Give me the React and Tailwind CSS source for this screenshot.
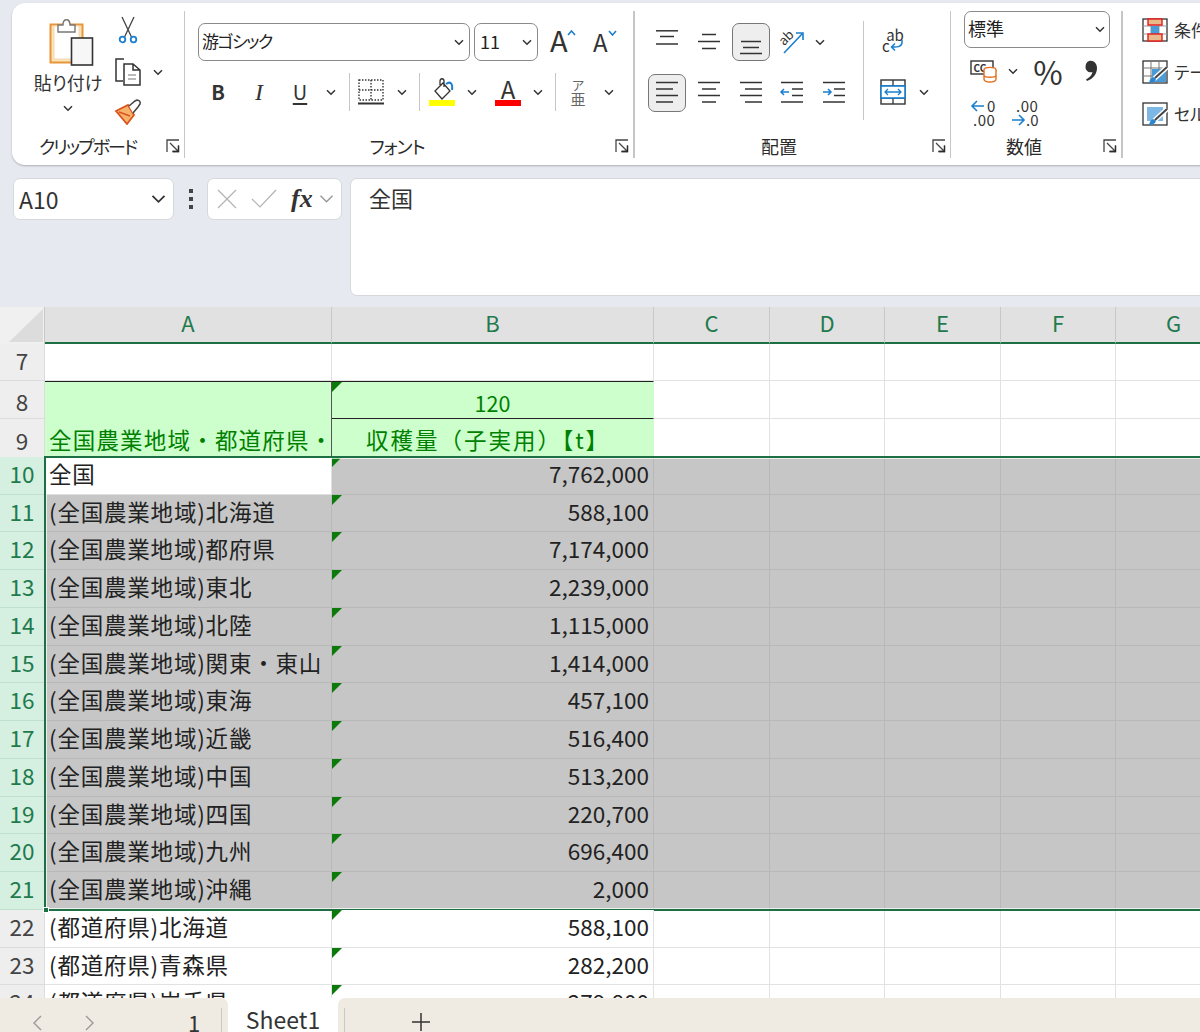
import React from "react";

const FONT = { fontFamily: '"Noto Sans CJK JP", "Noto Sans", sans-serif' };
const PALT = { fontFeatureSettings: '"palt"' };

const Chev = ({ w = 10, c = "#333", sw = 1.5, className = "" }) => (
  <svg width={w} height={w * 0.7} viewBox="0 0 10 7" className={className}>
    <path d="M1 1.2 L5 5.2 L9 1.2" fill="none" stroke={c} strokeWidth={sw} />
  </svg>
);

const Launcher = () => (
  <svg width="14" height="14" viewBox="0 0 14 14">
    <path d="M1 13 V1 H13 M4 4 L12.5 12.5 M6.5 12.5 H12.5 V6.5" fill="none" stroke="#444" strokeWidth="1.3" />
    <path d="M6.5 12.5 H12.5 V6.5" fill="none" stroke="#2a2a2a" strokeWidth="1.3" />
  </svg>
);

const Lines = ({ lines, w = 24, h = 24, accent }) => (
  <svg width={w} height={h} viewBox={`0 0 ${w} ${h}`} className="overflow-visible">
    {lines.map(([a, b, y], i) => (
      <line key={i} x1={a} x2={b} y1={y} y2={y} stroke="#333" strokeWidth="1.5" />
    ))}
    {accent}
  </svg>
);

const Paste = () => (
  <svg width="46" height="50" viewBox="0 0 46 50">
    <rect x="1.5" y="7.5" width="32" height="38" fill="#fbe3b8" stroke="#e8953a" strokeWidth="2" />
    <rect x="5" y="9" width="25" height="33" fill="#fff" stroke="#f2d9b0" />
    <path d="M9 8 V15 H26 V8 H21 C21 1 14 1 14 8 Z" fill="#fff" stroke="#777" strokeWidth="1.4" />
    <rect x="22.5" y="21" width="21" height="27" fill="#f7f7f7" stroke="#333" strokeWidth="1.6" />
  </svg>
);
const Scissors = () => (
  <svg width="20" height="28" viewBox="0 0 20 28">
    <path d="M4 1 L13.5 21 M16 1 L6.5 21" stroke="#444" strokeWidth="1.3" fill="none" />
    <circle cx="4.5" cy="23.5" r="2.8" fill="#fff" stroke="#1a7fd0" strokeWidth="1.8" />
    <circle cx="15.5" cy="23.5" r="2.8" fill="#fff" stroke="#1a7fd0" strokeWidth="1.8" />
  </svg>
);
const Copy = () => (
  <svg width="28" height="28" viewBox="0 0 28 28">
    <path d="M10 1 H2 V23 H9" fill="none" stroke="#333" strokeWidth="1.5" />
    <path d="M10 6 H19 L26 12 V27 H10 Z M19 6 V12 H26" fill="#fff" stroke="#333" strokeWidth="1.5" />
    <path d="M14 17 H22 M14 21 H22" stroke="#777" strokeWidth="1.2" />
  </svg>
);
const Brush = () => (
  <svg width="28" height="26" viewBox="0 0 28 26">
    <path d="M2 12 L14 6 L20 16 L13 25 Z" fill="#f6b26b" stroke="#d9541e" strokeWidth="1.8" />
    <path d="M5 13 L16 17" stroke="#d9541e" strokeWidth="1.5" />
    <path d="M15 7 L21 2 L23 1 C25 1 27 3 26 5 L24 8 L19 14" fill="#fff" stroke="#444" strokeWidth="1.5" />
  </svg>
);
const Borders = () => (
  <svg width="26" height="26" viewBox="0 0 26 26">
    <path d="M1 1 H25 V21 H1 Z M13 1 V21 M1 11 H25" fill="none" stroke="#333" strokeWidth="1.4" strokeDasharray="1.5 1.5" />
    <path d="M0 24.5 H26" stroke="#333" strokeWidth="2" />
  </svg>
);
const Fill = () => (
  <svg width="26" height="28" viewBox="0 0 26 28">
    <path d="M6 13 L14 5 L21 13 L13 21 Z M11 7 V3 C11 0 15 0 15 3 V9" fill="#fff" stroke="#333" strokeWidth="1.3" />
    <path d="M17 6 C21 3 24 5 23 12" fill="none" stroke="#1a7fd0" strokeWidth="2" />
    <rect x="0" y="22" width="26" height="6" fill="#ffff00" />
  </svg>
);
const Orient = () => (
  <svg width="28" height="28" viewBox="0 0 28 28">
    <text x="2" y="15" fontSize="13" fill="#333" transform="rotate(-45 8 12)" style={FONT}>ab</text>
    <path d="M6 25 L24 6 M18 5 H25 V12" fill="none" stroke="#1a7fd0" strokeWidth="1.6" />
  </svg>
);
const Merge = () => (
  <svg width="26" height="26" viewBox="0 0 26 26">
    <rect x="1" y="1" width="24" height="24" fill="#fff" stroke="#333" strokeWidth="1.4" />
    <path d="M1 7 H25 M1 19 H25 M13 1 V7 M13 19 V25" stroke="#333" strokeWidth="1.3" />
    <rect x="1" y="7" width="24" height="12" fill="#fff" stroke="#1a7fd0" strokeWidth="1.6" />
    <path d="M5 13 H21 M8 10 L5 13 L8 16 M18 10 L21 13 L18 16" fill="none" stroke="#1a7fd0" strokeWidth="1.3" />
  </svg>
);
const Accounting = () => (
  <svg width="28" height="24" viewBox="0 0 28 24">
    <rect x="1" y="2" width="22" height="13" fill="#fff" stroke="#333" strokeWidth="1.4" />
    <text x="3.5" y="13" fontSize="10" fontWeight="700" fill="#333" style={FONT}>CC</text>
    <ellipse cx="20" cy="11" rx="6" ry="2.6" fill="#fff" stroke="#e2701e" strokeWidth="1.4" />
    <path d="M14 11 V20 C14 24 26 24 26 20 V11 M14 16 C14 19 26 19 26 16" fill="#fff" stroke="#e2701e" strokeWidth="1.4" />
  </svg>
);
const Comma = () => (
  <svg width="14" height="22" viewBox="0 0 14 22">
    <path d="M5 1 C10 0 13 4 13 8 C13 14 9 19 3 21 L2 19.5 C6 17 8 15 8.5 12 C5 13 1.5 11 1.5 7 C1.5 3.5 3 1.5 5 1 Z" fill="#333" />
  </svg>
);
const Arrow = ({ dir }) => (
  <svg width="14" height="12" viewBox="0 0 14 12">
    <path d={dir === "l" ? "M14 6 H2 M7 1 L2 6 L7 11" : "M0 6 H12 M7 1 L12 6 L7 11"} fill="none" stroke="#1a7fd0" strokeWidth="1.6" />
  </svg>
);
const CondFormat = () => (
  <svg width="26" height="24" viewBox="0 0 26 24">
    <rect x="1" y="1" width="24" height="22" fill="#fff" stroke="#333" strokeWidth="1.3" />
    <path d="M9 1 V23 M17 1 V23 M1 8 H25 M1 16 H25" stroke="#999" strokeWidth="1" />
    <rect x="9" y="8" width="8" height="8" fill="#4a9bd6" />
    <rect x="6" y="1" width="14" height="6" fill="#e8b98a" stroke="#e81a1a" strokeWidth="1.4" />
    <rect x="6" y="16" width="14" height="7" fill="#e8b98a" stroke="#e81a1a" strokeWidth="1.4" />
  </svg>
);
const TableFmt = ({ solid }) => (
  <svg width="26" height="24" viewBox="0 0 26 24">
    <rect x="1" y="1" width="24" height="22" fill="#fff" stroke="#333" strokeWidth="1.3" />
    {solid ? <rect x="5" y="5" width="16" height="14" fill="#7db8e4" /> : <path d="M1 8 H25 M9 1 V23 M17 1 V23 M1 16 H25" stroke="#777" strokeWidth="1" />}
    {!solid && <rect x="10" y="9" width="14" height="13" fill="#4a9bd6" />}
    <path d="M25 7 L12 19" stroke="#fff" strokeWidth="5" />
    <path d="M25 7 L13 18" stroke="#444" strokeWidth="2" />
    <path d="M7 23 C8 17 12 16 14 19 C13 22 10 23 7 23 Z" fill="#2a86d1" />
  </svg>
);

const Cell = ({ w, children, className = "" }) => (
  <div className={`flex items-center justify-center shrink-0 ${className}`} style={{ width: w }}>{children}</div>
);
const VSep = () => <div className="w-px h-[38px] bg-[#c6c6c6] shrink-0" />;

const GroupFooter = ({ label, pad, track = 0 }) => (
  <div className="mt-auto flex items-center h-[24px] pr-[4px]">
    <div className="flex-1 text-center text-[18px] leading-none text-[#2a2a2a]" style={{ paddingRight: pad, letterSpacing: track, ...PALT }}>{label}</div>
    <Launcher />
  </div>
);

const Ribbon = () => (
  <div className="ml-3 mt-[3px] w-[1230px] h-[162px] bg-white rounded-[13px] shadow-[0_1px_2px_rgba(0,0,0,0.25)] flex pt-[8px] shrink-0">
    {/* clipboard */}
    <div className="w-[173px] h-[147px] border-r border-[#c6c6c6] flex flex-col shrink-0">
      <div className="flex">
        <div className="ml-[22px] w-[68px] flex flex-col items-center pt-[6px] shrink-0">
          <div className="ml-[8px]"><Paste /></div>
          <div className="text-[18px] leading-none mt-[6px] text-[#333] whitespace-nowrap" style={PALT}>貼り付け</div>
          <Chev className="mt-[14px]" />
        </div>
        <div className="ml-[12px] flex flex-col pt-[5px]">
          <div className="ml-[4px] h-[36px]"><Scissors /></div>
          <div className="flex items-center mt-[5px] h-[30px]"><Copy /><Chev className="ml-[11px]" /></div>
          <div className="mt-[12px]"><Brush /></div>
        </div>
      </div>
      <GroupFooter label="クリップボード" pad={3} track={-2} />
    </div>
    {/* font */}
    <div className="w-[450px] h-[147px] border-r-2 border-[#c6c6c6] flex flex-col shrink-0">
      <div className="flex items-center pl-[13px] pt-[12px]">
        <div className="w-[272px] h-[38px] border border-[#8a8a8a] rounded-[7px] flex items-center justify-between pl-[3px] pr-[5px] text-[17px] tracking-[-1.5px] text-[#222]">
          <span className="-mt-[2px]" style={PALT}>游ゴシック</span><Chev />
        </div>
        <div className="ml-[4px] w-[64px] h-[38px] border border-[#8a8a8a] rounded-[7px] flex items-center justify-between pl-[5px] pr-[5px] text-[18px] text-[#222]">
          <span className="-mt-[2px]">11</span><Chev />
        </div>
        <div className="ml-[12px] w-[26px] flex items-start relative -mt-[6px]">
          <span className="text-[29px] leading-none text-[#333]">A</span>
          <svg width="9" height="6" viewBox="0 0 9 6" className="mt-[5px] -ml-[1px]"><path d="M1 5 L4.5 1 L8 5" fill="none" stroke="#1a7fd0" strokeWidth="1.6" /></svg>
        </div>
        <div className="ml-[17px] w-[26px] flex items-start -mt-[4px]">
          <span className="text-[24px] leading-none text-[#333] mt-[4px]">A</span>
          <svg width="9" height="6" viewBox="0 0 9 6" className="mt-[4px]"><path d="M1 1 L4.5 5 L8 1" fill="none" stroke="#1a7fd0" strokeWidth="1.6" /></svg>
        </div>
      </div>
      <div className="flex items-center pt-[12px] pl-[12px]">
        <Cell w={42} className="text-[20px] font-bold text-[#333]">B</Cell>
        <Cell w={40}><span className="text-[24px] italic text-[#333]" style={{ fontFamily: '"Liberation Serif", serif' }}>I</span></Cell>
        <Cell w={42}><span className="text-[20px] underline underline-offset-[3px] text-[#333]">U</span></Cell>
        <Cell w={20}><Chev /></Cell>
        <Cell w={16}><VSep /></Cell>
        <Cell w={28}><Borders /></Cell>
        <Cell w={33}><Chev /></Cell>
        <Cell w={2}><VSep /></Cell>
        <Cell w={44}><Fill /></Cell>
        <Cell w={16}><Chev /></Cell>
        <Cell w={50} className="flex-col ml-[3px]">
          <span className="text-[24px] leading-[22px] text-[#333]">A</span>
          <span className="w-[26px] h-[6px] bg-[#ff0000]" />
        </Cell>
        <Cell w={10}><Chev /></Cell>
        <Cell w={24}><VSep /></Cell>
        <Cell w={22} className="flex-col text-[#666] leading-none">
          <span className="text-[13px] leading-[13px]">ア</span>
          <span className="text-[15px] leading-[15px]">亜</span>
        </Cell>
        <Cell w={40}><Chev /></Cell>
      </div>
      <GroupFooter label="フォント" pad={6} track={-1} />
    </div>
    {/* alignment */}
    <div className="w-[316px] h-[147px] border-r border-[#c6c6c6] flex shrink-0 relative">
      <div className="flex flex-col flex-1 min-w-0">
        <div className="flex">
          <div className="w-[228px] shrink-0 flex flex-col pl-[13px] pt-[12px]">
            <div className="flex items-center h-[38px]">
              <Cell w={38}><Lines lines={[[1, 23, 0.8], [5, 19, 6.5], [1, 23, 14]]} /></Cell>
              <Cell w={46}><Lines lines={[[5, 19, 4.5], [1, 23, 11.5], [5, 19, 18.5]]} /></Cell>
              <Cell w={38} className="h-[38px] bg-[#eeeeee] border border-[#777] rounded-[7px]"><Lines lines={[[2, 22, 11.5], [4, 20, 17.5], [1, 23, 23.5]]} /></Cell>
              <Cell w={44}><Orient /></Cell>
              <Cell w={12}><Chev /></Cell>
            </div>
            <div className="flex items-center h-[38px] mt-[13px]">
              <Cell w={38} className="h-[38px] bg-[#eeeeee] border border-[#777] rounded-[7px]"><Lines lines={[[1, 23, 1.5], [1, 18, 8], [1, 23, 14.5], [1, 18, 21]]} /></Cell>
              <Cell w={46}><Lines lines={[[1, 23, 1.5], [5, 19, 8], [1, 23, 14.5], [5, 19, 21]]} /></Cell>
              <Cell w={38}><Lines lines={[[1, 23, 1.5], [6, 23, 8], [1, 23, 14.5], [6, 23, 21]]} /></Cell>
              <Cell w={44}><Lines lines={[[1, 23, 1.5], [12, 23, 8], [12, 23, 14.5], [1, 23, 21]]} accent={<path d="M9 11 H1 M4 8 L1 11 L4 14" fill="none" stroke="#1a7fd0" strokeWidth="1.5" />} /></Cell>
              <Cell w={40}><Lines lines={[[1, 23, 1.5], [12, 23, 8], [12, 23, 14.5], [1, 23, 21]]} accent={<path d="M1 11 H9 M6 8 L9 11 L6 14" fill="none" stroke="#1a7fd0" strokeWidth="1.5" />} /></Cell>
            </div>
          </div>
          <div className="w-px h-[99px] mt-[10px] bg-[#c6c6c6] shrink-0" />
          <div className="flex flex-col pl-[16px] pt-[18px]">
            <div className="w-[30px] flex flex-col items-center leading-[11px] text-[15px] text-[#333] relative h-[27px]">
              <span>ab</span>
              <span className="flex items-center w-full pl-[2px]">c
                <svg width="13" height="11" viewBox="0 0 13 11"><path d="M12 0 V2 C12 7 8 7 2 7 M5 3.5 L1.5 7 L5 10.5" fill="none" stroke="#1a7fd0" strokeWidth="1.5" /></svg>
              </span>
            </div>
            <div className="flex items-center mt-[23px]"><Merge /><Chev className="ml-[13px]" /></div>
          </div>
        </div>
        <GroupFooter label="配置" pad={9} />
      </div>
    </div>
    {/* number */}
    <div className="w-[172px] h-[147px] border-r-2 border-[#c6c6c6] flex flex-col shrink-0 pl-[13px]">
      <div className="w-[146px] h-[37px] border border-[#8a8a8a] rounded-[7px] flex items-center justify-between pl-[3px] pr-[4px] text-[18px] text-[#222]">
        <span className="-mt-[2px]">標準</span><Chev />
      </div>
      <div className="flex items-center mt-[8px] h-[30px]">
        <Cell w={40}><Accounting /></Cell>
        <Cell w={18}><Chev /></Cell>
        <Cell w={52} className="text-[32px] leading-none text-[#333]">%</Cell>
        <Cell w={34}><Comma /></Cell>
      </div>
      <div className="flex items-center mt-[12px] h-[30px] pl-[6px] text-[#333] text-[15px] leading-[14px]">
        <div className="w-[42px] flex flex-col">
          <div className="flex items-center h-[14px]"><Arrow dir="l" /><span className="ml-[3px]">0</span></div>
          <div className="h-[14px] pl-[3px] tracking-[0.5px]">.00</div>
        </div>
        <div className="flex flex-col">
          <div className="h-[14px] pl-[4px] tracking-[0.5px]">.00</div>
          <div className="flex items-center h-[14px]"><Arrow dir="r" /><span>.0</span></div>
        </div>
      </div>
      <GroupFooter label="数値" pad={19} />
    </div>
    {/* styles */}
    <div className="flex flex-col pl-[19px] pt-[7px] gap-[18px] text-[17px] text-[#333]">
      {[<CondFormat />, <TableFmt />, <TableFmt solid />].map((ic, i) => (
        <div key={i} className="flex items-center gap-[6px] h-[24px] whitespace-nowrap">
          {ic}<span style={PALT}>{["条件付き書式", "テーブルとして書式設定", "セルのスタイル"][i]}</span>
        </div>
      ))}
    </div>
  </div>
);

const FormulaBar = () => (
  <div className="flex items-start mt-[13px] pl-[13px] h-[129px] shrink-0">
    <div className="w-[161px] h-[42px] shrink-0 bg-white rounded-[7px] border border-[#d6d8dc] flex items-center justify-between pl-[5px] pr-[7px] text-[23px] text-[#333]">
      <span>A10</span><Chev w={15} sw={1.2} />
    </div>
    <div className="w-[33px] h-[42px] shrink-0 flex flex-col items-center justify-center gap-[4px]">
      {[0, 1, 2].map((i) => <span key={i} className="w-[4px] h-[4px] bg-[#444]" />)}
    </div>
    <div className="w-[135px] h-[42px] shrink-0 bg-white rounded-[7px] border border-[#d6d8dc] flex items-center text-[#aaa]">
      <svg width="20" height="20" viewBox="0 0 20 20" className="ml-[9px]"><path d="M1 1 L19 19 M19 1 L1 19" stroke="#b3b3b3" strokeWidth="1.2" /></svg>
      <svg width="26" height="20" viewBox="0 0 26 20" className="ml-[14px]"><path d="M1 10 L9 18 L25 1" fill="none" stroke="#b3b3b3" strokeWidth="1.2" /></svg>
      <span className="ml-[14px] text-[26px] leading-none font-bold italic text-[#333]" style={{ fontFamily: '"Liberation Serif", serif' }}>fx</span>
      <Chev w={15} c="#999" sw={1} className="ml-[6px]" />
    </div>
    <div className="ml-[8px] w-[900px] h-[118px] shrink-0 bg-white rounded-[7px] border border-[#d6d8dc] pl-[18px] pt-[2px] text-[22px] text-[#333]">全国</div>
  </div>
);

const COLS = [287, 322, 116, 115, 116, 115, 116];
const ROW_H = "h-[37.75px]";

const Tri = () => <span className="absolute left-0 top-0 w-0 h-0 border-t-[10px] border-r-[10px] border-t-[#0b7a0b] border-r-transparent" />;

const Row = ({ n, a, b, sel, white, mark = true }) => (
  <div className={`flex ${ROW_H} shrink-0`}>
    <div className={`w-[45px] shrink-0 flex items-center justify-center pb-[3px] text-[22.5px] border-b border-r ${sel ? "bg-[#d5efe0] text-[#1f7a4d] border-[#bfe0cd]" : "bg-[#eeeeee] text-[#444] border-[#dcdcdc]"}`}>{n}</div>
    <div className={`w-[287px] shrink-0 flex items-center pl-[4px] pb-[3px] whitespace-nowrap overflow-hidden text-[22.5px] tracking-[0.8px] text-[#222] border-b border-r ${white ? "bg-white border-[#e0e0e0]" : sel ? "bg-[#c6c6c6] border-[#b8b8b8]" : "bg-white border-[#e2e2e2]"}`}>{a}</div>
    <div className={`relative w-[322px] shrink-0 flex items-center justify-end pr-[4px] pb-[3px] text-[22.5px] text-[#222] border-b border-r ${sel ? "bg-[#c6c6c6] border-[#b8b8b8]" : "bg-white border-[#e2e2e2]"}`}>
      {mark && <Tri />}{b}
    </div>
    {COLS.slice(2).map((w, i) => (
      <div key={i} style={{ width: w }} className={`shrink-0 border-b border-r ${sel ? "bg-[#c6c6c6] border-[#b8b8b8]" : "bg-white border-[#e2e2e2]"}`} />
    ))}
  </div>
);

const selected = [
  ["全国", "7,762,000"],
  ["(全国農業地域)北海道", "588,100"],
  ["(全国農業地域)都府県", "7,174,000"],
  ["(全国農業地域)東北", "2,239,000"],
  ["(全国農業地域)北陸", "1,115,000"],
  ["(全国農業地域)関東・東山", "1,414,000"],
  ["(全国農業地域)東海", "457,100"],
  ["(全国農業地域)近畿", "516,400"],
  ["(全国農業地域)中国", "513,200"],
  ["(全国農業地域)四国", "220,700"],
  ["(全国農業地域)九州", "696,400"],
  ["(全国農業地域)沖縄", "2,000"],
];

const Sheet = () => (
  <div className="flex-1 min-h-0 overflow-hidden flex flex-col" style={FONT}>
    <div className="flex h-[36.5px] shrink-0">
      <div className="w-[45px] shrink-0 bg-[#f0f0f0] border-r border-[#c8c8c8] flex items-end justify-end pb-[2px] pr-[1px]">
        <svg width="34" height="33" viewBox="0 0 34 33"><path d="M34 0 V33 H0 Z" fill="#dcdcdc" /></svg>
      </div>
      {COLS.map((w, i) => (
        <div key={i} style={{ width: w }} className="shrink-0 bg-[#e1e1e1] border-r border-[#c8c8c8] border-b-2 border-b-[#1d7044] flex items-center justify-center pb-[5px] text-[22px] leading-none text-[#1f7a4d]">
          {"ABCDEFG"[i]}
        </div>
      ))}
    </div>
    <Row n={7} a="" b="" mark={false} />
    <div className="flex h-[37.75px] shrink-0">
      <div className="w-[45px] shrink-0 flex items-center justify-center pt-[5px] text-[22.5px] bg-[#eeeeee] text-[#444] border-b border-r border-[#dcdcdc]">8</div>
      <div className="w-[287px] shrink-0 bg-[#ccffcc] border-t border-t-[#222] border-r border-r-[#555]" />
      <div className="relative w-[322px] shrink-0 bg-[#ccffcc] border-t border-t-[#222] border-b border-b-[#222] flex items-center justify-center pt-[6px] text-[21.5px] text-[#008000] border-r border-r-[#ccffcc]"><Tri />120</div>
      {COLS.slice(2).map((w, i) => <div key={i} style={{ width: w }} className="shrink-0 bg-white border-b border-r border-[#e2e2e2]" />)}
    </div>
    <div className="flex h-[37.75px] shrink-0">
      <div className="w-[45px] shrink-0 flex items-center justify-center pt-[5px] text-[22.5px] bg-[#eeeeee] text-[#444] border-r border-[#dcdcdc]">9</div>
      <div className="w-[287px] shrink-0 bg-[#ccffcc] border-r border-r-[#555] flex items-center pl-[4px] pt-[3px] whitespace-nowrap overflow-hidden text-[22.5px] tracking-[1.2px] text-[#008000]">全国農業地域・都道府県・</div>
      <div className="w-[322px] shrink-0 bg-[#ccffcc] flex items-center justify-center pr-[10px] pt-[4px] text-[22.5px] tracking-[2px] text-[#008000] whitespace-nowrap">収穫量（子実用）【t】</div>
      {COLS.slice(2).map((w, i) => <div key={i} style={{ width: w }} className="shrink-0 bg-white border-b border-r border-[#e2e2e2]" />)}
    </div>
    <div className="relative shrink-0 flex flex-col">
      {selected.map(([a, b], i) => <Row key={i} n={10 + i} a={a} b={b} sel white={i === 0} />)}
      <div className="absolute left-[44px] -top-[1px] -right-[10px] -bottom-[1px] border-2 border-[#1d7044] shadow-[inset_0_0_0_1px_rgba(255,255,255,0.7)] pointer-events-none" />
      <div className="absolute left-[43px] -bottom-[3px] w-[6px] h-[6px] bg-[#1d7044] border border-white pointer-events-none" />
    </div>
    <Row n={22} a="(都道府県)北海道" b="588,100" />
    <Row n={23} a="(都道府県)青森県" b="282,200" />
    <Row n={24} a="(都道府県)岩手県" b="279,800" />
  </div>
);

const Tabs = () => (
  <div className="h-[34px] shrink-0 flex bg-white text-[#333]" style={FONT}>
    <div className="w-[228px] bg-[#efeae2] rounded-tr-[7px] flex items-start shrink-0 relative">
      <svg width="11" height="16" viewBox="0 0 11 16" className="ml-[32px] mt-[17px] shrink-0"><path d="M9 1 L2 8 L9 15" fill="none" stroke="#9a9a9a" strokeWidth="1.4" /></svg>
      <svg width="11" height="16" viewBox="0 0 11 16" className="ml-[41px] mt-[17px] shrink-0"><path d="M2 1 L9 8 L2 15" fill="none" stroke="#9a9a9a" strokeWidth="1.4" /></svg>
      <span className="ml-[93px] mt-[13px] text-[22px] leading-none">1</span>
      <span className="ml-auto mr-[6px] mt-[10px] w-px h-[24px] bg-[#c8c8c8]" />
    </div>
    <div className="w-[110px] shrink-0 bg-white flex items-start justify-center pt-[7px] text-[23px] leading-[28px]">Sheet1</div>
    <div className="flex-1 bg-[#efeae2] rounded-tl-[7px] flex items-start relative">
      <span className="ml-[6px] mt-[10px] w-px h-[24px] bg-[#c8c8c8]" />
      <svg width="18" height="18" viewBox="0 0 18 18" className="ml-[67px] mt-[15px]"><path d="M9 0 V18 M0 9 H18" stroke="#333" strokeWidth="1.5" /></svg>
    </div>
  </div>
);

export default function App() {
  return (
    <div className="w-[1200px] h-[1032px] overflow-hidden bg-[#e6e9ef] flex flex-col" style={FONT}>
      <Ribbon />
      <FormulaBar />
      <Sheet />
      <Tabs />
    </div>
  );
}
